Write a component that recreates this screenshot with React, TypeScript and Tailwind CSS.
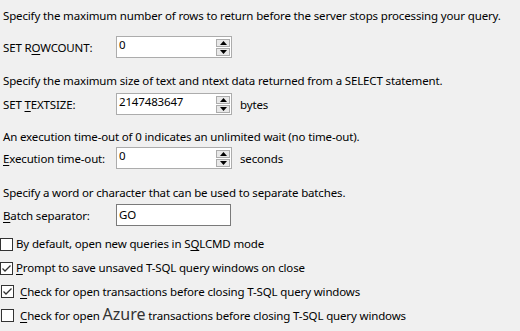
import React from "react";

const font = { fontFamily: '"Noto Sans", "Segoe UI", Arial, sans-serif' };

function SpinBtn({ up }: { up?: boolean }) {
  return (
    <div className="h-[8px] w-[14px] border border-[#acacac] bg-[#e8e8e8] flex items-center justify-center">
      <svg width="7" height="4" viewBox="0 0 7 4">
        {up ? <polygon points="0,4 7,4 3.5,0" fill="#000" /> : <polygon points="0,0 7,0 3.5,4" fill="#000" />}
      </svg>
    </div>
  );
}

function Spinner({ value }: { value: string }) {
  return (
    <div className="w-[116px] h-[22px] border border-[#acacac] bg-white flex shrink-0">
      <div className="flex-1 pl-[2px] leading-[16px] text-black">{value}</div>
      <div className="flex flex-col gap-[1px] pt-[2px] pr-[1px]">
        <SpinBtn up />
        <SpinBtn />
      </div>
    </div>
  );
}

function Check({ checked }: { checked?: boolean }) {
  return (
    <div className="w-[13px] h-[13px] border border-[#333] bg-white flex items-center justify-center shrink-0">
      {checked && (
        <svg width="11" height="11" viewBox="0 0 11 11">
          <polyline points="1.5,5.5 4,8 9.5,2.5" fill="none" stroke="#333" strokeWidth="1.3" />
        </svg>
      )}
    </div>
  );
}

export default function App() {
  return (
    <div
      className="w-[520px] h-[331px] bg-[#f0f0f0] text-[11.5px] tracking-[-0.15px] text-black overflow-hidden"
      style={font}
    >
      <div className="pt-[8px] pl-[3px] flex flex-col">
        <div className="h-[16px] leading-[16px] whitespace-nowrap">
          Specify the maximum number of rows to return before the server stops processing your query.
        </div>

        <div className="mt-[12px] flex items-start">
          <div className="w-[113px] mt-[4px] leading-[16px]">
            SET R<u className="underline-offset-2">O</u>WCOUNT:
          </div>
          <Spinner value="0" />
        </div>

        <div className="mt-[15px] h-[16px] leading-[16px] whitespace-nowrap">
          Specify the maximum size of text and ntext data returned from a SELECT statement.
        </div>

        <div className="mt-[4px] flex items-start">
          <div className="w-[113px] mt-[4px] leading-[16px]">
            SET <u className="underline-offset-2">T</u>EXTSIZE:
          </div>
          <Spinner value="2147483647" />
          <div className="ml-[8px] mt-[4px] leading-[16px]">bytes</div>
        </div>

        <div className="mt-[14px] h-[16px] leading-[16px] whitespace-nowrap">
          An execution time-out of 0 indicates an unlimited wait (no time-out).
        </div>

        <div className="mt-[2px] flex items-start">
          <div className="w-[113px] mt-[4px] leading-[16px]">
            <u className="underline-offset-2">E</u>xecution time-out:
          </div>
          <Spinner value="0" />
          <div className="ml-[8px] mt-[4px] leading-[16px]">seconds</div>
        </div>

        <div className="mt-[16px] h-[16px] leading-[16px] whitespace-nowrap">
          Specify a word or character that can be used to separate batches.
        </div>

        <div className="mt-[3px] flex items-start">
          <div className="w-[113px] mt-[4px] leading-[16px]">
            <u className="underline-offset-2">B</u>atch separator:
          </div>
          <div className="w-[115px] h-[22px] border border-[#7a7a7a] bg-white pl-[2px] leading-[20px]">GO</div>
        </div>
      </div>

      <div className="mt-[6px] flex flex-col">
        <div className="h-[24px] flex items-center gap-[3px]">
          <Check />
          <span className="leading-[16px] whitespace-nowrap">
            By default, open new queries in S<u className="underline-offset-2">Q</u>LCMD mode
          </span>
        </div>
        <div className="h-[24px] flex items-center gap-[3px]">
          <Check checked />
          <span className="leading-[16px] whitespace-nowrap">
            <u className="underline-offset-2">P</u>rompt to save unsaved T-SQL query windows on close
          </span>
        </div>
        <div className="h-[23px] flex items-center gap-[6px] pl-[1px]">
          <Check checked />
          <span className="leading-[16px] whitespace-nowrap">
            <u className="underline-offset-2">C</u>heck for open transactions before closing T-SQL query windows
          </span>
        </div>
        <div className="h-[24px] flex items-center gap-[6px] pl-[1px]">
          <Check />
          <span className="leading-[16px] whitespace-nowrap flex items-baseline">
            <span>
              <u className="underline-offset-2">C</u>heck for open&nbsp;
            </span>
            <span className="text-[16px] tracking-normal text-[#333] leading-[16px]">Azure</span>
            <span>&nbsp;transactions before closing T-SQL query windows</span>
          </span>
        </div>
      </div>
    </div>
  );
}
